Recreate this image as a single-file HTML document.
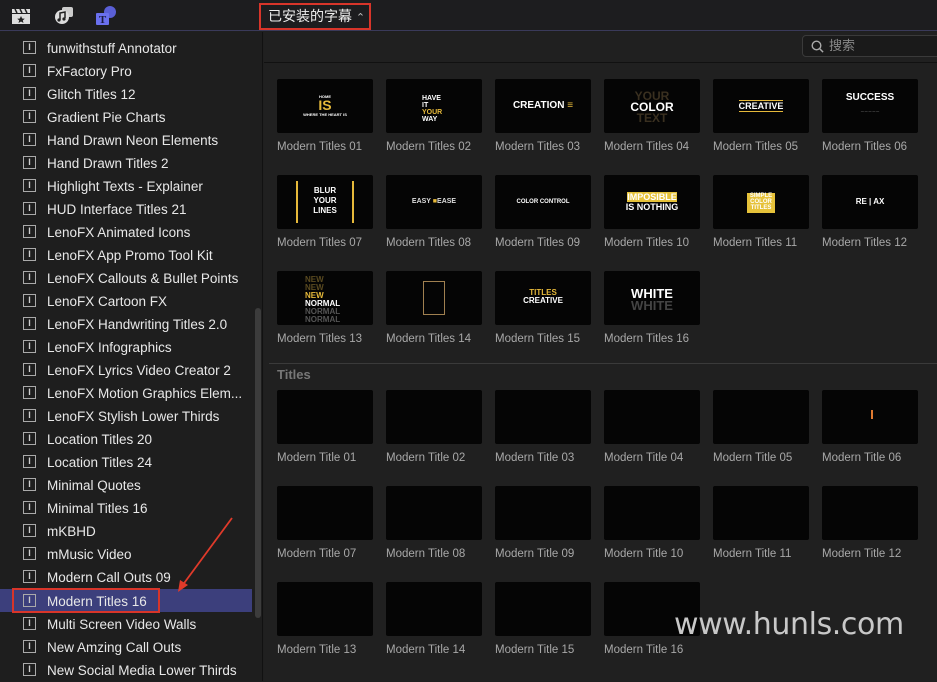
<!DOCTYPE html>
<html><head><meta charset="utf-8"><style>
*{margin:0;padding:0;box-sizing:border-box}
body{width:937px;height:681px;overflow:hidden;background:#1f1f1f;font-family:"Liberation Sans","Noto Sans CJK SC",sans-serif;position:relative;color:#ddd}
#top{position:absolute;left:0;top:0;width:937px;height:31px;background:#1d1d1f;border-bottom:1px solid #3a3a5a}
#side{position:absolute;left:0;top:32px;width:263px;height:649px;background:#1e1e1e;border-right:1px solid #111}
.it{position:absolute;left:0;width:252px;height:23px;font-size:13.5px;color:#e8e8e8;line-height:23px}
.it .ic{position:absolute;left:23px;top:5px;width:13px;height:13px;border:1px solid #aaa;font-size:9px;line-height:11px;text-align:center;color:#ccc;font-weight:bold}
.it span.t{position:absolute;left:47px;top:1px}
.sel{background:#3c3f7c}
#sb{position:absolute;left:255px;top:276px;width:6px;height:310px;background:#3c3c3c;border-radius:3px}
#right{position:absolute;left:264px;top:32px;width:673px;height:649px;background:#202020}
.th{position:absolute;width:96px;height:54px;background:#050505;border-radius:2px;overflow:hidden;color:#fff;font-weight:bold;text-align:center}
.lb{position:absolute;font-size:11.5px;color:#a8a8a8;white-space:nowrap;margin-top:2px}
.y{color:#e6b93a}
</style></head><body>
<div id="top">
<svg style="position:absolute;left:11px;top:8px" width="20" height="17"><rect x="1" y="6" width="18" height="10" fill="#ddd"/><path d="M1 1h18v4H1z" fill="#ddd"/><path d="M4 1l2 4M9 1l2 4M14 1l2 4" stroke="#222" stroke-width="1.5"/><path d="M10 8l1.2 2.5 2.6.2-2 1.7.7 2.6-2.5-1.5-2.5 1.5.7-2.6-2-1.7 2.6-.2z" fill="#222"/></svg>
<svg style="position:absolute;left:53px;top:6px" width="22" height="20"><rect x="9" y="1" width="11" height="10" rx="2" fill="#ccc"/><circle cx="9" cy="11" r="7" fill="#ddd"/><path d="M7 14V7l5-1v6" stroke="#222" stroke-width="1.5" fill="none"/><circle cx="6" cy="14" r="1.6" fill="#222"/><circle cx="11" cy="13" r="1.6" fill="#222"/></svg>
<svg style="position:absolute;left:95px;top:5px" width="22" height="21"><circle cx="15" cy="7" r="6" fill="#5a5fd6"/><rect x="1" y="8" width="13" height="12" rx="1" fill="#6a70ee"/><text x="7.5" y="18" font-size="11" font-weight="bold" fill="#1a1a40" text-anchor="middle" font-family="Liberation Serif">T</text></svg>
<div style="position:absolute;left:259px;top:3px;width:112px;height:27px;border:2px solid #d8352a;font-size:14px;color:#eee;line-height:23px;padding-left:7px">已安装的字幕 <span style="font-size:11px;color:#bbb">⌃</span></div>
</div>
<div id="side">
<div class="it" style="top:4px"><span class="ic">I</span><span class="t">funwithstuff Annotator</span></div>
<div class="it" style="top:27px"><span class="ic">I</span><span class="t">FxFactory Pro</span></div>
<div class="it" style="top:50px"><span class="ic">I</span><span class="t">Glitch Titles 12</span></div>
<div class="it" style="top:73px"><span class="ic">I</span><span class="t">Gradient Pie Charts</span></div>
<div class="it" style="top:96px"><span class="ic">I</span><span class="t">Hand Drawn Neon Elements</span></div>
<div class="it" style="top:119px"><span class="ic">I</span><span class="t">Hand Drawn Titles 2</span></div>
<div class="it" style="top:142px"><span class="ic">I</span><span class="t">Highlight Texts - Explainer</span></div>
<div class="it" style="top:165px"><span class="ic">I</span><span class="t">HUD Interface Titles 21</span></div>
<div class="it" style="top:188px"><span class="ic">I</span><span class="t">LenoFX Animated Icons</span></div>
<div class="it" style="top:211px"><span class="ic">I</span><span class="t">LenoFX App Promo Tool Kit</span></div>
<div class="it" style="top:234px"><span class="ic">I</span><span class="t">LenoFX Callouts &amp; Bullet Points</span></div>
<div class="it" style="top:257px"><span class="ic">I</span><span class="t">LenoFX Cartoon FX</span></div>
<div class="it" style="top:280px"><span class="ic">I</span><span class="t">LenoFX Handwriting Titles 2.0</span></div>
<div class="it" style="top:303px"><span class="ic">I</span><span class="t">LenoFX Infographics</span></div>
<div class="it" style="top:326px"><span class="ic">I</span><span class="t">LenoFX Lyrics Video Creator 2</span></div>
<div class="it" style="top:349px"><span class="ic">I</span><span class="t">LenoFX Motion Graphics Elem...</span></div>
<div class="it" style="top:372px"><span class="ic">I</span><span class="t">LenoFX Stylish Lower Thirds</span></div>
<div class="it" style="top:395px"><span class="ic">I</span><span class="t">Location Titles 20</span></div>
<div class="it" style="top:418px"><span class="ic">I</span><span class="t">Location Titles 24</span></div>
<div class="it" style="top:441px"><span class="ic">I</span><span class="t">Minimal Quotes</span></div>
<div class="it" style="top:464px"><span class="ic">I</span><span class="t">Minimal Titles 16</span></div>
<div class="it" style="top:487px"><span class="ic">I</span><span class="t">mKBHD</span></div>
<div class="it" style="top:510px"><span class="ic">I</span><span class="t">mMusic Video</span></div>
<div class="it" style="top:533px"><span class="ic">I</span><span class="t">Modern Call Outs 09</span></div>
<div class="it sel" style="top:557px"><span class="ic">I</span><span class="t">Modern Titles 16</span></div>
<div style="position:absolute;left:12px;top:556px;width:148px;height:25px;border:2px solid #d8352a"></div>
<div class="it" style="top:580px"><span class="ic">I</span><span class="t">Multi Screen Video Walls</span></div>
<div class="it" style="top:603px"><span class="ic">I</span><span class="t">New Amzing Call Outs</span></div>
<div class="it" style="top:626px"><span class="ic">I</span><span class="t">New Social Media Lower Thirds</span></div>
<svg style="position:absolute;left:170px;top:484px" width="70" height="80"><path d="M62 2L12 70" stroke="#e03a2a" stroke-width="1.8"/><path d="M8 76l2-12 8 5z" fill="#e03a2a"/></svg>
<div id="sb"></div>
</div>
<div id="right">
<div style="position:absolute;left:0;top:30px;width:673px;height:1px;background:#111"></div>
<div style="position:absolute;left:538px;top:3px;width:140px;height:22px;background:#1a1a1a;border:1px solid #3a3a3a;border-radius:4px;font-size:13px;color:#888;line-height:20px;padding-left:26px">搜索
<svg style="position:absolute;left:8px;top:4px" width="13" height="13"><circle cx="5.5" cy="5.5" r="4.3" stroke="#aaa" stroke-width="1.4" fill="none"/><path d="M8.6 8.6l3.5 3.5" stroke="#aaa" stroke-width="1.5"/></svg></div>
<div style="position:absolute;left:5px;top:331px;width:668px;height:1px;background:#3a3a3a"></div>
<div style="position:absolute;left:13px;top:335px;font-size:13px;color:#777;font-weight:bold">Titles</div>
</div>
<div class="th" style="left:277px;top:79px"><div style="font-size:4px;margin-top:15px">HOME</div><div class="y" style="font-size:14px;line-height:13px">IS</div><div style="font-size:4px">WHERE THE HEART IS</div></div>
<div class="th" style="left:386px;top:79px;text-align:left;padding-left:36px;font-size:7px;line-height:7px;padding-top:16px">HAVE<br>IT<br><span class="y">YOUR</span><br>WAY</div>
<div class="th" style="left:495px;top:79px;font-size:10px;line-height:54px">CREATION <span class="y">≡</span></div>
<div class="th" style="left:604px;top:79px;font-size:12px;line-height:11px;padding-top:12px"><span style="color:#3a3020">YOUR</span><br>COLOR<br><span style="color:#3a3020">TEXT</span></div>
<div class="th" style="left:713px;top:79px;font-size:9px;line-height:54px"><span style="border-top:1px solid #e6b93a;border-bottom:1px solid #e6b93a">CREATIVE</span></div>
<div class="th" style="left:822px;top:79px;font-size:10px;padding-top:13px">SUCCESS<div style="font-size:3px;color:#999;margin-top:6px">— — — — —</div></div>
<div class="th" style="left:277px;top:175px;font-size:8px;line-height:10px;padding-top:11px"><div style="position:absolute;left:19px;top:6px;width:58px;height:42px;border-left:2px solid #e6b93a;border-right:2px solid #e6b93a"></div>BLUR<br>YOUR<br>LINES</div>
<div class="th" style="left:386px;top:175px;font-size:7px;line-height:54px;color:#ddd">EASY <span class="y">■</span>EASE</div>
<div class="th" style="left:495px;top:175px;font-size:6px;line-height:54px">COLOR CONTROL</div>
<div class="th" style="left:604px;top:175px;font-size:9px;line-height:10px;padding-top:17px"><span style="background:#e6c23a;color:#fff">IMPOSIBLE</span><br>IS NOTHING</div>
<div class="th" style="left:713px;top:175px;font-size:6px;padding-top:18px"><span style="background:#e6c23a;display:inline-block;width:28px;height:20px;line-height:6px">SIMPLE COLOR TITLES</span></div>
<div class="th" style="left:822px;top:175px;font-size:8px;line-height:54px">RE | AX</div>
<div class="th" style="left:277px;top:271px;text-align:left;padding-left:28px;font-size:8px;line-height:8px;padding-top:5px"><span style="color:#5a4a20">NEW<br>NEW</span><br><span class="y">NEW</span><br>NORMAL<br><span style="color:#555">NORMAL<br>NORMAL</span></div>
<div class="th" style="left:386px;top:271px"><div style="position:absolute;left:37px;top:10px;width:22px;height:34px;border:1px solid #a08050"></div></div>
<div class="th" style="left:495px;top:271px;font-size:8px;line-height:8px;padding-top:18px"><span class="y">TITLES</span><br>CREATIVE</div>
<div class="th" style="left:604px;top:271px;font-size:13px;line-height:12px;padding-top:17px">WHITE<br><span style="color:#444">WHITE</span></div>
<div class="lb" style="left:277px;top:139px">Modern Titles 01</div><div class="lb" style="left:386px;top:139px">Modern Titles 02</div><div class="lb" style="left:495px;top:139px">Modern Titles 03</div><div class="lb" style="left:604px;top:139px">Modern Titles 04</div><div class="lb" style="left:713px;top:139px">Modern Titles 05</div><div class="lb" style="left:822px;top:139px">Modern Titles 06</div>
<div class="lb" style="left:277px;top:235px">Modern Titles 07</div><div class="lb" style="left:386px;top:235px">Modern Titles 08</div><div class="lb" style="left:495px;top:235px">Modern Titles 09</div><div class="lb" style="left:604px;top:235px">Modern Titles 10</div><div class="lb" style="left:713px;top:235px">Modern Titles 11</div><div class="lb" style="left:822px;top:235px">Modern Titles 12</div>
<div class="lb" style="left:277px;top:331px">Modern Titles 13</div><div class="lb" style="left:386px;top:331px">Modern Titles 14</div><div class="lb" style="left:495px;top:331px">Modern Titles 15</div><div class="lb" style="left:604px;top:331px">Modern Titles 16</div>
<div class="th" style="left:277px;top:390px"></div><div class="th" style="left:386px;top:390px"></div><div class="th" style="left:495px;top:390px"></div><div class="th" style="left:604px;top:390px"></div><div class="th" style="left:713px;top:390px"></div><div class="th" style="left:822px;top:390px"><div style="position:absolute;left:49px;top:20px;width:2px;height:9px;background:#e07a30"></div></div>
<div class="th" style="left:277px;top:486px"></div><div class="th" style="left:386px;top:486px"></div><div class="th" style="left:495px;top:486px"></div><div class="th" style="left:604px;top:486px"></div><div class="th" style="left:713px;top:486px"></div><div class="th" style="left:822px;top:486px"></div>
<div class="th" style="left:277px;top:582px"></div><div class="th" style="left:386px;top:582px"></div><div class="th" style="left:495px;top:582px"></div><div class="th" style="left:604px;top:582px"></div>
<div class="lb" style="left:277px;top:450px">Modern Title 01</div><div class="lb" style="left:386px;top:450px">Modern Title 02</div><div class="lb" style="left:495px;top:450px">Modern Title 03</div><div class="lb" style="left:604px;top:450px">Modern Title 04</div><div class="lb" style="left:713px;top:450px">Modern Title 05</div><div class="lb" style="left:822px;top:450px">Modern Title 06</div>
<div class="lb" style="left:277px;top:546px">Modern Title 07</div><div class="lb" style="left:386px;top:546px">Modern Title 08</div><div class="lb" style="left:495px;top:546px">Modern Title 09</div><div class="lb" style="left:604px;top:546px">Modern Title 10</div><div class="lb" style="left:713px;top:546px">Modern Title 11</div><div class="lb" style="left:822px;top:546px">Modern Title 12</div>
<div class="lb" style="left:277px;top:642px">Modern Title 13</div><div class="lb" style="left:386px;top:642px">Modern Title 14</div><div class="lb" style="left:495px;top:642px">Modern Title 15</div><div class="lb" style="left:604px;top:642px">Modern Title 16</div>
<div style="position:absolute;left:674px;top:607px;font-size:30px;color:#c8c8c8;font-family:'DejaVu Sans','Liberation Sans',sans-serif;letter-spacing:-0.4px">www.hunls.com</div>
</body></html>
